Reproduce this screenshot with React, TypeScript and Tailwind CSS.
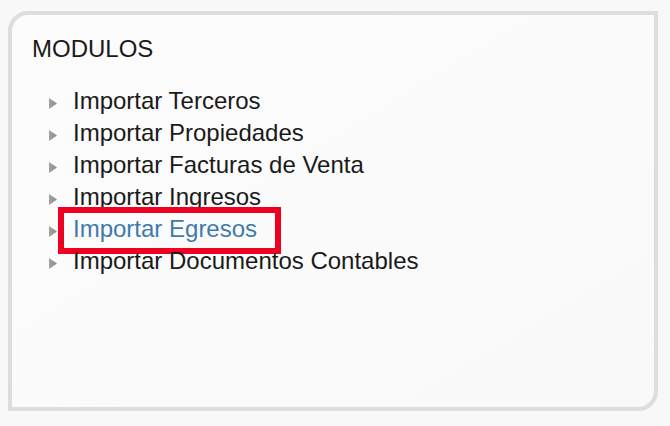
const MODULES = [
  "Importar Terceros",
  "Importar Propiedades",
  "Importar Facturas de Venta",
  "Importar Ingresos",
  "Importar Egresos",
  "Importar Documentos Contables",
];

const ACTIVE = "Importar Egresos";

function Arrow() {
  return (
    <svg width="8" height="11" viewBox="0 0 8 11" className="mt-[13px] ml-[17px] shrink-0">
      <defs>
        <linearGradient id="arrowGrad" x1="0" y1="0" x2="1" y2="0">
          <stop offset="0" stopColor="#a4a4a4" />
          <stop offset="1" stopColor="#8a8a8a" />
        </linearGradient>
      </defs>
      <path d="M0 0 L8 5.5 L0 11 Z" fill="url(#arrowGrad)" />
    </svg>
  );
}

export default function App() {
  return (
    <div className="w-[670px] h-[426px] bg-[#f8f8f8] pl-[8px] pt-[11px] font-['Liberation_Sans',Arial,sans-serif]">
      <div className="w-[650px] h-[400px] border-4 border-[#dddddd] rounded-tl-[20px] rounded-br-[20px] bg-gradient-to-br from-[#fcfcfc] via-[#fbfbfb] to-[#f9f9f9] pt-[18px] pl-[20px]">
        <h2 className="text-[24px] leading-8 text-[#1a1a1a]">MODULOS</h2>
        <ul className="mt-[20px] flex flex-col">
          {MODULES.map((label) => (
            <li key={label} className="relative flex items-start h-8">
              <Arrow />
              <span
                className={
                  "ml-[16px] text-[24px] leading-8 " +
                  (label === ACTIVE ? "text-[#3f7aab]" : "text-[#1a1a1a]")
                }
              >
                {label}
              </span>
              {label === ACTIVE && (
                <div className="absolute left-[26px] top-[-6px] w-[223px] h-[47px] border-[6px] border-[#ee0022]" />
              )}
            </li>
          ))}
        </ul>
      </div>
    </div>
  );
}
